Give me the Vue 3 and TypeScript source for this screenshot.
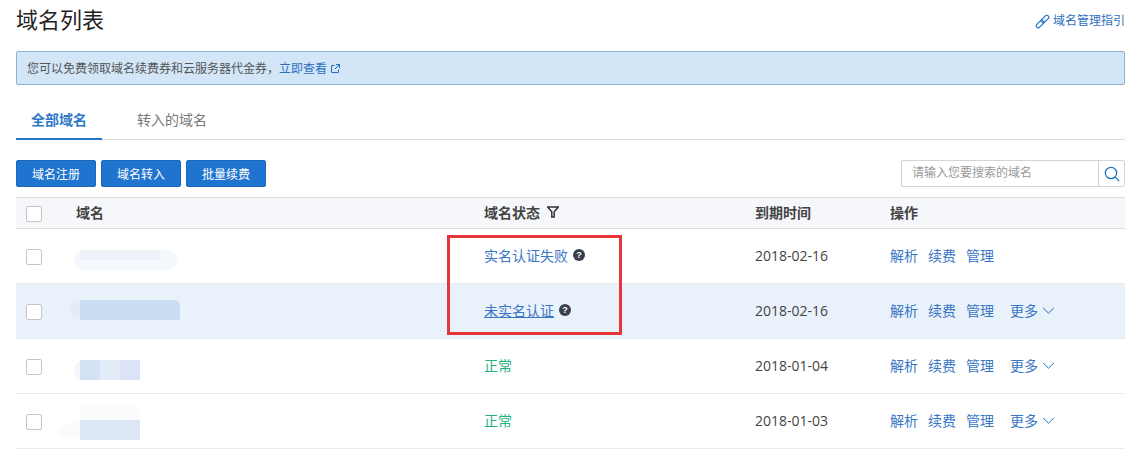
<script setup lang="ts">
interface Blur {
  left: number;
  top: number;
  width: number;
  height: number;
  color: string;
  radius?: string;
}

interface Row {
  status: string;
  kind: "link" | "under" | "ok";
  hint: boolean;
  date: string;
  more: boolean;
  active: boolean;
  blurs: Blur[];
}

const rows: Row[] = [
  {
    status: "实名认证失败",
    kind: "link",
    hint: true,
    date: "2018-02-16",
    more: false,
    active: false,
    blurs: [
      { left: 74, top: 21, width: 104, height: 20, color: "#f5f8fc", radius: "10px" },
      { left: 80, top: 21, width: 80, height: 10, color: "#eef2f9" },
    ],
  },
  {
    status: "未实名认证",
    kind: "under",
    hint: true,
    date: "2018-02-16",
    more: true,
    active: true,
    blurs: [
      { left: 70, top: 16, width: 30, height: 20, color: "#e3edf9", radius: "10px 0 0 10px" },
      { left: 80, top: 16, width: 100, height: 20, color: "#cbddf3", radius: "0 5px 0 0" },
    ],
  },
  {
    status: "正常",
    kind: "ok",
    hint: false,
    date: "2018-01-04",
    more: true,
    active: false,
    blurs: [
      { left: 74, top: 21, width: 20, height: 20, color: "#f3f6fb", radius: "10px 0 0 10px" },
      { left: 80, top: 21, width: 20, height: 20, color: "#d5e1f5" },
      { left: 100, top: 21, width: 20, height: 20, color: "#e4ebf8" },
      { left: 120, top: 21, width: 20, height: 20, color: "#dae4f6" },
    ],
  },
  {
    status: "正常",
    kind: "ok",
    hint: false,
    date: "2018-01-03",
    more: true,
    active: false,
    blurs: [
      { left: 57, top: 26, width: 24, height: 18, color: "#fafbfd", radius: "100% 0 0 0" },
      { left: 80, top: 11, width: 60, height: 15, color: "#fafbfd", radius: "8px 8px 0 0" },
      { left: 80, top: 26, width: 60, height: 20, color: "#dde6f7" },
    ],
  },
];

const blurStyle = (b: Blur) => ({
  left: `${b.left}px`,
  top: `${b.top}px`,
  width: `${b.width}px`,
  height: `${b.height}px`,
  background: b.color,
  borderRadius: b.radius ?? "0",
});
</script>

<template>
  <div class="page">
    <header class="top">
      <h1>域名列表</h1>
      <a class="guide">
        <svg width="15" height="15" viewBox="0 0 15 15" fill="none" stroke="#1f6fc4" stroke-width="1.2">
          <rect x="8" y="0.5" width="4" height="9" rx="2" transform="rotate(45 10 5)" />
          <rect x="3" y="5.5" width="4" height="9" rx="2" transform="rotate(45 5 10)" />
        </svg>
        域名管理指引
      </a>
    </header>

    <div class="notice">
      您可以免费领取域名续费券和云服务器代金券，<a class="notice-link">立即查看</a>
      <svg class="ext" width="9" height="9" viewBox="0 0 9 9" fill="none" stroke="#1f6fc4" stroke-width="1">
        <path d="M3.5 1.5H.5v7h7V5.5M5 .5h3.5V4M8.5.5 4 5" />
      </svg>
    </div>

    <nav class="tabs">
      <span class="tab on">全部域名</span>
      <span class="tab">转入的域名</span>
    </nav>

    <div class="toolbar">
      <button class="btn">域名注册</button>
      <button class="btn">域名转入</button>
      <button class="btn">批量续费</button>
      <div class="search">
        <span class="ph">请输入您要搜索的域名</span>
        <span class="search-btn">
          <svg width="16" height="16" viewBox="0 0 16 16" fill="none" stroke="#1f6fc4" stroke-width="1.2">
            <circle cx="7" cy="7" r="5.7" />
            <path d="m11.2 11.2 4 4" />
          </svg>
        </span>
      </div>
    </div>

    <div class="table">
      <div class="row head">
        <span class="check" />
        <span>域名</span>
        <span class="status-head">
          域名状态
          <svg width="12" height="12" viewBox="0 0 12 12" fill="none" stroke="#333" stroke-width="1.5">
            <path d="M.6 1h10.8L7.2 5.8V11H4.8V5.8z" />
          </svg>
        </span>
        <span>到期时间</span>
        <span>操作</span>
      </div>

      <div v-for="(r, i) in rows" :key="i" class="row" :class="{ active: r.active }">
        <span class="check" />
        <span class="name">
          <i v-for="(b, j) in r.blurs" :key="j" class="blur" :style="blurStyle(b)" />
        </span>
        <span class="status" :class="r.kind">
          <span class="status-text">{{ r.status }}</span>
          <span v-if="r.hint" class="hint">?</span>
        </span>
        <span class="date">{{ r.date }}</span>
        <span class="ops">
          <a>解析</a>
          <a>续费</a>
          <a>管理</a>
          <a v-if="r.more" class="more">
            更多
            <svg class="chev" width="13" height="7" viewBox="0 0 13 7" fill="none" stroke="#1f6fc4" stroke-width="1">
              <path d="m1 .8 5.5 5.4L12 .8" />
            </svg>
          </a>
        </span>
      </div>
    </div>

    <div class="mark" />
  </div>
</template>

<style scoped>
.page {
  position: relative;
  height: 456px;
  overflow: hidden;
  padding: 0 18px 0 16px;
  box-sizing: border-box;
  background: #fff;
  color: #333;
  font: 14px "Liberation Sans", "Noto Sans CJK SC", sans-serif;
}

.top {
  height: 51px;
  display: flex;
  justify-content: space-between;
  align-items: flex-start;
}

h1 {
  margin: 6px 0 0;
  font-size: 22px;
  line-height: 30px;
  font-weight: 400;
  color: #222;
}

.guide {
  margin-top: 12px;
  display: flex;
  align-items: center;
  gap: 3px;
  font-size: 12px;
  line-height: 18px;
  color: #2f6fc0;
}

.notice {
  height: 34px;
  box-sizing: border-box;
  padding: 0 0 1px 10px;
  display: flex;
  align-items: center;
  background: #d2e6f8;
  border: 1px solid #8fb2cf;
  border-radius: 2px;
  font-size: 12px;
  color: #555;
}

.notice-link {
  color: #2f6fc0;
}

.ext {
  margin-left: 4px;
  margin-top: 2px;
}

.tabs {
  margin-top: 16px;
  height: 39px;
  box-sizing: border-box;
  display: flex;
  border-bottom: 1px solid #d9d9d9;
}

.tab {
  padding: 0 15px;
  margin-right: 20px;
  height: 39px;
  box-sizing: border-box;
  line-height: 38px;
  color: #777;
}

.tab.on {
  color: #2f78c8;
  font-weight: 700;
  border-bottom: 2px solid #2277cc;
}

.toolbar {
  margin-top: 20px;
  display: flex;
  gap: 5px;
}

.btn {
  width: 80px;
  height: 27px;
  padding: 0;
  background: #1f74cf;
  border: 1px solid #1b68ba;
  border-radius: 2px;
  color: #fff;
  font: 12px "Liberation Sans", "Noto Sans CJK SC", sans-serif;
}

.search {
  margin-left: auto;
  width: 224px;
  height: 27px;
  box-sizing: border-box;
  display: flex;
  border: 1px solid #d4d4d4;
  border-radius: 2px;
}

.ph {
  flex: 1;
  padding-left: 10px;
  font-size: 12px;
  line-height: 25px;
  color: #999;
}

.search-btn {
  width: 25px;
  display: flex;
  align-items: center;
  justify-content: center;
  border-left: 1px solid #d4d4d4;
}

.table {
  margin-top: 10px;
}

.row {
  position: relative;
  display: grid;
  grid-template-columns: 60px 408px 271px 135px 1fr;
  align-items: center;
  height: 55px;
  box-sizing: border-box;
  padding-bottom: 2px;
  border-bottom: 1px solid #eaeaea;
}

.row.head {
  height: 32px;
  background: #f6f7fa;
  border-top: 1px solid #dcdcdc;
  border-bottom: 1px solid #dcdcdc;
  color: #444;
  font-weight: 700;
}

.row.active {
  background: #e9f1fb;
}

.check {
  width: 16px;
  height: 16px;
  margin: 4px 0 0 10px;
  box-sizing: border-box;
  background: #fff;
  border: 1px solid #c4c4c4;
  border-radius: 2px;
}

.status-head {
  display: flex;
  align-items: center;
  gap: 7px;
}

.name {
  align-self: stretch;
}

.blur {
  position: absolute;
  margin-left: -16px;
}

.status {
  display: flex;
  align-items: center;
  gap: 5px;
}

.status.link .status-text,
.status.under .status-text {
  color: #3a76c4;
}

.status.under .status-text {
  text-decoration: underline;
}

.status.ok .status-text {
  color: #1fb37c;
}

.hint {
  width: 12px;
  height: 12px;
  border-radius: 50%;
  background: #3a3f4a;
  color: #fff;
  font-size: 9px;
  font-weight: 700;
  line-height: 12px;
  text-align: center;
}

.date {
  font-family: "Open Sans", sans-serif;
  font-size: 14px;
  color: #444;
}

.ops {
  display: flex;
  align-items: center;
  gap: 10px;
  color: #3a76c4;
}

.more {
  margin-left: 6px;
  display: flex;
  align-items: center;
  gap: 4px;
}

.chev {
  margin-top: 1px;
}

.mark {
  position: absolute;
  left: 447px;
  top: 235px;
  width: 175px;
  height: 100px;
  box-sizing: border-box;
  border: 3px solid #e8353b;
}
</style>

<style>
html,
body {
  margin: 0;
  background: #fff;
}
</style>
